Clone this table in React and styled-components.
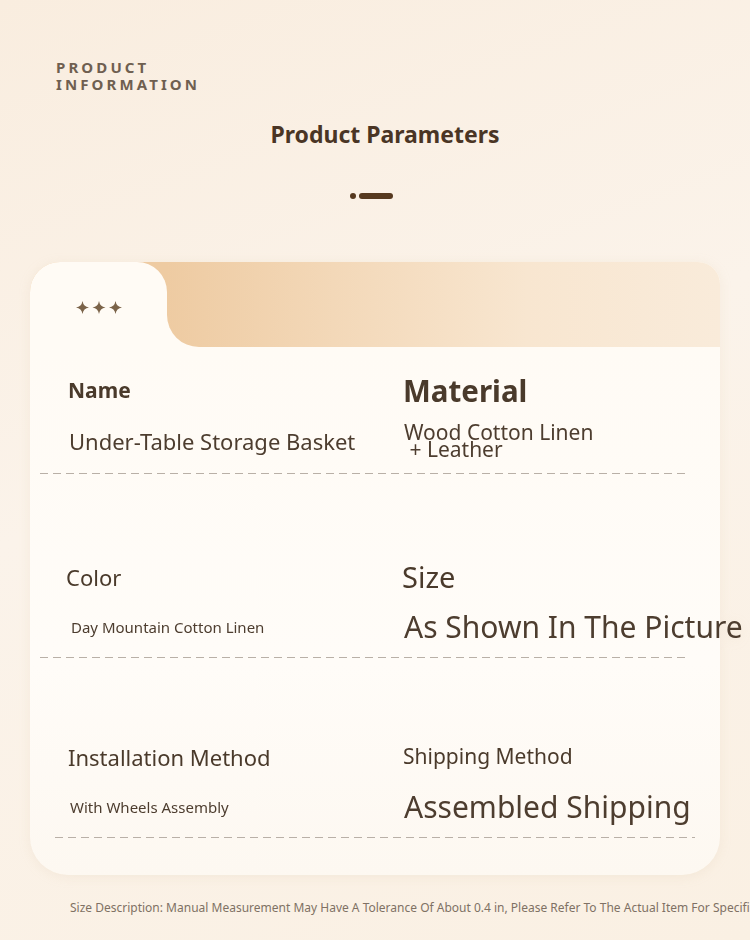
import React from 'react'
import styled, { createGlobalStyle } from 'styled-components'

const GlobalStyle = createGlobalStyle`
  html, body {
    margin: 0;
    padding: 0;
    overflow: hidden;
  }
  body {
    font-family: "Noto Sans", "Open Sans", sans-serif;
    background: #f9efe3;
  }
`

const params = [
  {
    label: 'Name', labelSize: 21, labelWeight: 700,
    value: 'Under-Table Storage Basket', valueSize: 22, valueShift: 1,
    label2: 'Material', label2Size: 29.5, label2Weight: 700,
    value2: ['Wood Cotton Linen', ' + Leather'], value2Size: 21,
    pad: [19, 8], line: [10, 32],
  },
  {
    label: 'Color', labelSize: 22, labelShift: -2,
    value: 'Day Mountain Cotton Linen', valueSize: 15, valueShift: 3,
    label2: 'Size', label2Size: 29, label2Shift: -1,
    value2: ['As Shown In The Picture'], value2Size: 30,
    pad: [78, 6], line: [10, 32],
  },
  {
    label: 'Installation Method', labelSize: 22,
    value: 'With Wheels Assembly', valueSize: 15, valueShift: 2,
    label2: 'Shipping Method', label2Size: 21,
    value2: ['Assembled Shipping'], value2Size: 30,
    pad: [74, 6], line: [25, 25],
  },
]

function Stars() {
  const star = 'M6.5 0 Q7.4 5.6 13 6.5 Q7.4 7.4 6.5 13 Q5.6 7.4 0 6.5 Q5.6 5.6 6.5 0Z'
  return (
    <svg width="50" height="14" viewBox="0 0 50 14">
      {[0, 16.5, 33].map((x) => (
        <path key={x} d={star} transform={`translate(${x} 0)`} fill="#7b6349" />
      ))}
    </svg>
  )
}

export default function App() {
  return (
    <Page>
      <GlobalStyle />
      <Eyebrow>PRODUCT<br />INFORMATION</Eyebrow>
      <Title>Product Parameters</Title>
      <Dots>
        <Dot />
        <Bar />
      </Dots>

      <Card>
        <CardHead>
          <TabCell>
            <Tab>
              <Stars />
            </Tab>
          </TabCell>
          <BandCell>
            <Band />
          </BandCell>
        </CardHead>
        <CardBody>
          {params.map((p) => (
            <Row key={p.label} $pad={p.pad} $left={p.line[0]} $right={p.line[1]}>
              <Cell>
                <Label $size={p.labelSize} $weight={p.labelWeight} $shift={p.labelShift}>{p.label}</Label>
                <Value $size={p.valueSize} $shift={p.valueShift}>{p.value}</Value>
              </Cell>
              <Cell>
                <Label $size={p.label2Size} $weight={p.label2Weight} $shift={p.label2Shift}>{p.label2}</Label>
                <Value $size={p.value2Size} $shift={1} $tight={p.value2.length > 1}>
                  {p.value2.map((v) => <span key={v}>{v}</span>)}
                </Value>
              </Cell>
            </Row>
          ))}
        </CardBody>
      </Card>

      <Note>
        Size Description: Manual Measurement May Have A Tolerance Of About 0.4 in, Please Refer To The Actual Item For Specific Dimensions
      </Note>
    </Page>
  )
}

const Page = styled.div`
  width: 750px;
  height: 940px;
  overflow: hidden;
  background: linear-gradient(160deg, #f9eddf 0%, #fbf3ea 45%, #faf0e3 100%);
  padding-top: 59px;
  box-sizing: border-box;
`

const Eyebrow = styled.div`
  margin-left: 56px;
  font-size: 15px;
  font-weight: 700;
  letter-spacing: 3.1px;
  line-height: 17px;
  color: #6f5f50;
`

const Title = styled.h1`
  margin: 26px 0 0;
  padding-left: 20px;
  text-align: center;
  font-size: 23px;
  font-weight: 700;
  line-height: 30px;
  color: #4a3524;
`

const Dots = styled.div`
  display: flex;
  justify-content: center;
  align-items: center;
  gap: 3px;
  margin-top: 44px;
  padding-right: 8px;
`

const Dot = styled.span`
  width: 6px;
  height: 6px;
  border-radius: 50%;
  background: #56391f;
`

const Bar = styled.span`
  width: 34px;
  height: 6px;
  border-radius: 3px;
  background: #56391f;
`

const Card = styled.div`
  margin: 63px 30px 0 30px;
  filter: drop-shadow(0 2px 6px rgba(200, 170, 130, 0.12));
`

const CardHead = styled.div`
  display: flex;
  height: 85px;
`

const TabCell = styled.div`
  width: 137px;
  background: #eecba2;
  border-top-left-radius: 30px;
`

const Tab = styled.div`
  height: 100%;
  box-sizing: border-box;
  padding: 36px 0 0 46px;
  background: #fffbf5;
  border-radius: 30px 30px 0 0;
`

const BandCell = styled.div`
  flex: 1;
  background: #fffbf5;
  border-top-right-radius: 22px;
`

const Band = styled.div`
  height: 100%;
  background: linear-gradient(90deg, #eecba2 0%, #f3d8b8 30%, #f8e6d0 65%, #f9ebda 100%);
  border-radius: 0 22px 0 32px;
`

const CardBody = styled.div`
  background: linear-gradient(180deg, #fffbf5 0%, #fffcf8 60%, #fdf8f1 100%);
  border-radius: 0 0 38px 38px;
  padding-bottom: 37px;
`

const Row = styled.div`
  position: relative;
  display: grid;
  grid-template-columns: 335px 1fr;
  padding: ${(p) => p.$pad[0]}px 0 ${(p) => p.$pad[1]}px 38px;

  &::after {
    content: '';
    position: absolute;
    left: ${(p) => p.$left}px;
    right: ${(p) => p.$right}px;
    bottom: 0;
    height: 1.5px;
    background: repeating-linear-gradient(90deg, #b9b0a7 0 8px, transparent 8px 13px);
  }
`

const Cell = styled.div`
  display: grid;
  grid-template-rows: 50px 50px;
  align-items: center;
  white-space: nowrap;
`

const Label = styled.div`
  margin-left: ${(p) => p.$shift || 0}px;
  font-size: ${(p) => p.$size}px;
  font-weight: ${(p) => p.$weight || 400};
  line-height: 1.2;
  color: #4a3a2b;
`

const Value = styled.div`
  display: flex;
  flex-direction: column;
  margin-left: ${(p) => p.$shift || 0}px;
  font-size: ${(p) => p.$size}px;
  line-height: ${(p) => (p.$tight ? '17px' : '1.2')};
  color: #4d3d2f;
  white-space: pre;
`

const Note = styled.p`
  margin: 24px 0 0 70px;
  font-size: 12px;
  color: #7f7164;
  white-space: nowrap;
`
